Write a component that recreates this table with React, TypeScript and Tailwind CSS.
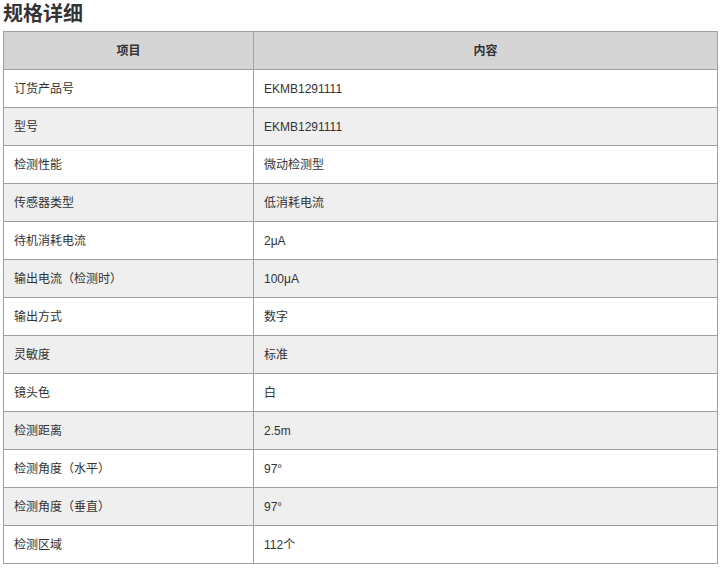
import React from "react";

const rows: [string, string][] = [
  ["订货产品号", "EKMB1291111"],
  ["型号", "EKMB1291111"],
  ["检测性能", "微动检测型"],
  ["传感器类型", "低消耗电流"],
  ["待机消耗电流", "2μA"],
  ["输出电流（检测时）", "100μA"],
  ["输出方式", "数字"],
  ["灵敏度", "标准"],
  ["镜头色", "白"],
  ["检测距离", "2.5m"],
  ["检测角度（水平）", "97°"],
  ["检测角度（垂直）", "97°"],
  ["检测区域", "112个"],
];

const App: React.FC = () => {
  return (
    <div className="bg-white w-[723px] h-[568px] px-[3px] font-['Arial','Liberation_Sans','Noto_Sans_CJK_SC',sans-serif] text-[#333]">
      <h2 className="text-[20px] leading-[28px] font-bold text-[#333] mb-[3px]">规格详细</h2>
      <table className="w-[715px] border-collapse text-[12px] table-fixed">
        <thead>
          <tr className="bg-[#d5d5d5] h-[38px]">
            <th className="w-[250px] border border-[#a0a0a0] font-bold text-center">项目</th>
            <th className="border border-[#a0a0a0] font-bold text-center">内容</th>
          </tr>
        </thead>
        <tbody>
          {rows.map(([k, v], i) => (
            <tr key={i} className={`h-[38px] ${i % 2 === 1 ? "bg-[#efefef]" : "bg-white"}`}>
              <td className="border border-[#a0a0a0] pl-[10px]">{k}</td>
              <td className="border border-[#a0a0a0] pl-[10px]">{v}</td>
            </tr>
          ))}
        </tbody>
      </table>
    </div>
  );
};

export default App;
